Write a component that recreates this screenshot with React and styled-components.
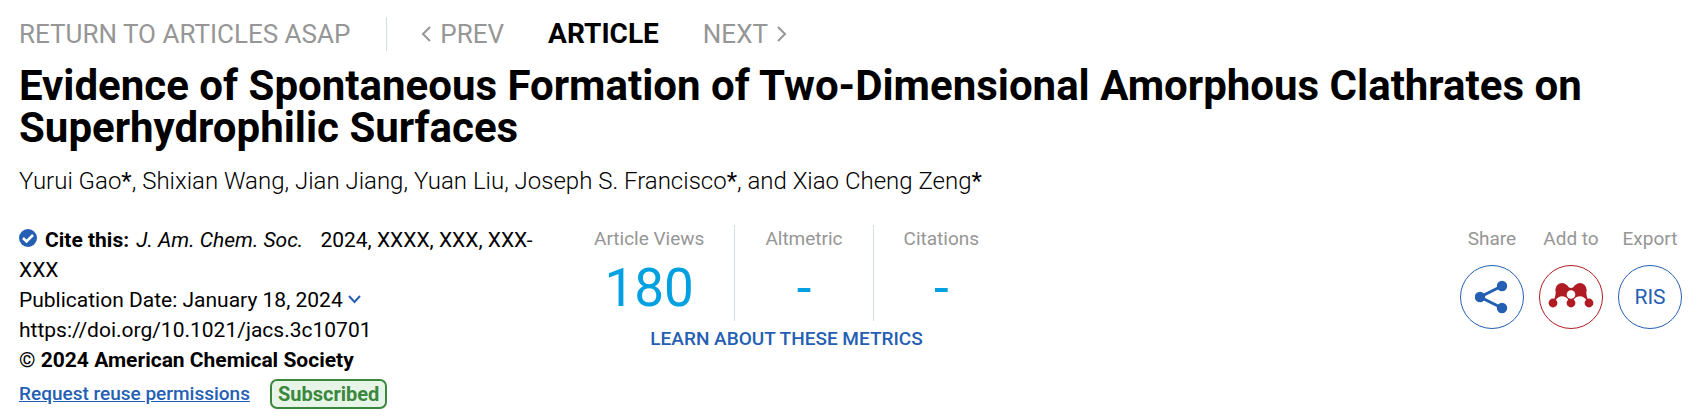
import React from "react";
import styled, { createGlobalStyle } from "styled-components";

const GlobalStyle = createGlobalStyle`
  * {
    box-sizing: border-box;
  }

  body {
    margin: 0;
    background: #fff;
    color: #000;
    font-family: Roboto, "Liberation Sans", sans-serif;
  }
`;

const Page = styled.main`
  padding: 16px 15px 8px 19px;
`;

const Nav = styled.nav`
  display: flex;
  align-items: center;
  height: 36px;
  font-size: 26px;
  line-height: 36px;
`;

const NavLink = styled.a`
  display: flex;
  align-items: center;
  gap: 9px;
  color: #969696;
  text-decoration: none;
`;

const NavDivider = styled.span`
  width: 1px;
  height: 34px;
  margin: 0 34px 0 36px;
  background: #d5dfe3;
`;

const Current = styled.strong`
  margin: 0 44px;
  font-size: 28px;
  font-weight: 700;
`;

const Title = styled.h1`
  margin: 13px 0 0;
  font-size: 42px;
  font-weight: 700;
  line-height: 42px;
`;

const Authors = styled.p`
  margin: 14px 0 0;
  font-size: 24px;
  font-weight: 300;
  line-height: 36px;

  b {
    font-weight: 400;
  }
`;

const Details = styled.section`
  display: flex;
  align-items: flex-start;
  margin-top: 26px;
`;

const Citation = styled.div`
  width: 34%;
  max-width: 545px;
  flex-shrink: 0;
  font-size: 21px;
  line-height: 30px;

  em {
    margin: 0 12px 0 2px;
  }
`;

const CheckIcon = styled.svg`
  width: 18px;
  height: 18px;
  margin-right: 8px;
`;

const DateToggle = styled.button`
  display: block;
  padding: 0;
  border: 0;
  background: none;
  color: inherit;
  font: inherit;
  cursor: pointer;
`;

const DoiLink = styled.a`
  display: block;
  color: inherit;
  text-decoration: none;
`;

const Copyright = styled.strong`
  display: block;
`;

const Access = styled.div`
  display: flex;
  align-items: center;
  gap: 20px;
  margin-top: 4px;
`;

const ReuseLink = styled.a`
  color: #255fb4;
  font-size: 19px;
  font-weight: 500;
  line-height: 24px;
`;

const Badge = styled.span`
  padding: 0 6px;
  border: 2px solid #3b873e;
  border-radius: 7px;
  background: #e6f5e7;
  color: #3b873e;
  font-size: 20px;
  font-weight: 700;
  line-height: 26px;
`;

const Metrics = styled.div`
  display: flex;
  flex-direction: column;
  align-items: center;
`;

const MetricList = styled.div`
  display: flex;
`;

const Metric = styled.div`
  height: 96px;
  padding: 0 30px;
  border-left: ${(props) => (props.$first ? "0" : "1px solid #d5dfe3")};
  text-align: center;
`;

const Label = styled.div`
  color: #969696;
  font-size: 19px;
  line-height: 28px;
`;

const Value = styled.div`
  color: #00a0e1;
  font-size: 53px;
  line-height: 70px;
`;

const MetricsLink = styled.a`
  color: #255fb4;
  font-size: 19px;
  font-weight: 500;
  line-height: 36px;
  text-decoration: none;
`;

const Actions = styled.div`
  display: flex;
  gap: 15px;
  margin-left: auto;
`;

const Action = styled.div`
  display: flex;
  flex-direction: column;
  align-items: center;
  width: 64px;
  gap: 12px;
  white-space: nowrap;
`;

const RoundButton = styled.button`
  display: flex;
  align-items: center;
  justify-content: center;
  width: 64px;
  height: 64px;
  padding: 0;
  border: 1px solid ${(props) => props.$color};
  border-radius: 50%;
  background: #fff;
  color: ${(props) => props.$color};
  font-family: inherit;
  font-size: 21px;
  cursor: pointer;
`;

const blue = "#255fb4";
const red = "#b01c24";

const Chevron = ({ d, width, height, color }) => (
  <svg width={width} height={height} viewBox={`0 0 ${width} ${height}`} fill="none" stroke={color} strokeWidth="2" aria-hidden="true">
    <path d={d} />
  </svg>
);

const ShareIcon = () => (
  <svg width="34" height="34" viewBox="0 0 34 34" fill="currentColor" aria-hidden="true">
    <path d="M27 6 5 17l22 11" fill="none" stroke="currentColor" strokeWidth="3" />
    <circle cx="27" cy="6" r="5.2" />
    <circle cx="5" cy="17" r="5.2" />
    <circle cx="27" cy="28" r="5.2" />
  </svg>
);

const MendeleyIcon = () => (
  <svg width="46" height="32" viewBox="0 0 46 32" fill="currentColor" aria-hidden="true">
    <circle cx="14" cy="8.500" r="6.500" />
    <circle cx="32" cy="8.500" r="6.500" />
    <path d="M7.500 8.500 19 4c2 4 6 4 8 0l11.500 4.500c-.5 3 0 6 .8 8.500l1 3-1 .5c-4-7-10-6-13.500-2l-2.300 4h-1l-2.300-4c-3.500-4-9.500-5-13.500 2l-1-.5 1-3c.8-2.500 1.300-5.500.8-8.500z" />
    <circle cx="5" cy="22" r="4.400" />
    <circle cx="23" cy="22" r="4.400" />
    <circle cx="41" cy="22" r="4.400" />
    <circle cx="23" cy="13.500" r="4.300" fill="#fff" />
  </svg>
);

const App = () => {
  return (
    <>
      <GlobalStyle />
      <Page>
        <Nav>
          <NavLink href="#asap">RETURN TO ARTICLES ASAP</NavLink>
          <NavDivider />
          <NavLink href="#prev">
            <Chevron d="M9 1 2 8l7 7" width={10} height={16} color="#969696" />
            PREV
          </NavLink>
          <Current>ARTICLE</Current>
          <NavLink href="#next">
            NEXT
            <Chevron d="m1 1 7 7-7 7" width={10} height={16} color="#969696" />
          </NavLink>
        </Nav>
        <Title>
          Evidence of Spontaneous Formation of Two-Dimensional Amorphous Clathrates on Superhydrophilic Surfaces
        </Title>
        <Authors>
          Yurui Gao<b>*</b>, Shixian Wang, Jian Jiang, Yuan Liu, Joseph S. Francisco<b>*</b>, and Xiao Cheng Zeng<b>*</b>
        </Authors>
        <Details>
          <Citation>
            <div>
              <CheckIcon viewBox="0 0 18 18" aria-hidden="true">
                <circle cx="9" cy="9" r="9" fill={blue} />
                <path d="m4 9 3.500 3.500L14 6" fill="none" stroke="#fff" strokeWidth="2.500" />
              </CheckIcon>
              <strong>Cite this:</strong> <em>J. Am. Chem. Soc.</em> 2024, XXXX, XXX, XXX-XXX
            </div>
            <DateToggle>
              Publication Date: January 18, 2024 <Chevron d="m1 3 5.500 6L12 3" width={13} height={14} color={blue} />
            </DateToggle>
            <DoiLink href="#doi">https://doi.org/10.1021/jacs.3c10701</DoiLink>
            <Copyright>© 2024 American Chemical Society</Copyright>
            <Access>
              <ReuseLink href="#permissions">Request reuse permissions</ReuseLink>
              <Badge>Subscribed</Badge>
            </Access>
          </Citation>
          <Metrics>
            <MetricList>
              <Metric $first>
                <Label>Article Views</Label>
                <Value>180</Value>
              </Metric>
              <Metric>
                <Label>Altmetric</Label>
                <Value>-</Value>
              </Metric>
              <Metric>
                <Label>Citations</Label>
                <Value>-</Value>
              </Metric>
            </MetricList>
            <MetricsLink href="#metrics">LEARN ABOUT THESE METRICS</MetricsLink>
          </Metrics>
          <Actions>
            <Action>
              <Label id="share">Share</Label>
              <RoundButton $color={blue} aria-labelledby="share">
                <ShareIcon />
              </RoundButton>
            </Action>
            <Action>
              <Label id="add">Add to</Label>
              <RoundButton $color={red} aria-labelledby="add">
                <MendeleyIcon />
              </RoundButton>
            </Action>
            <Action>
              <Label id="export">Export</Label>
              <RoundButton $color={blue} aria-describedby="export">
                RIS
              </RoundButton>
            </Action>
          </Actions>
        </Details>
      </Page>
    </>
  );
};

export default App;
